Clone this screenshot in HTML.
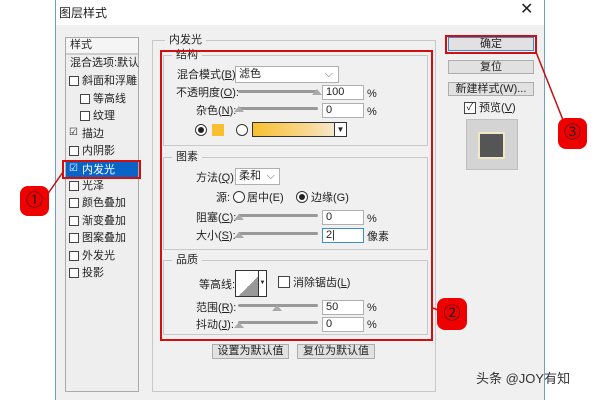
<!DOCTYPE html><html><head><meta charset="utf-8"><style>
*{margin:0;padding:0;box-sizing:border-box}
body{width:600px;height:400px;background:#fff;position:relative;overflow:hidden;font-family:"Liberation Sans","Noto Sans CJK SC",sans-serif;font-size:11px;color:#222}
.a{position:absolute}
.t{position:absolute;white-space:nowrap;line-height:12px}
.cb{position:absolute;width:10px;height:10px;border:1px solid #444;background:#fff}
.box{position:absolute;border:1px solid #b0b0b0;background:#fff;height:15px;padding-left:3px;line-height:13px}
.sl{position:absolute;height:3px;background:#999;border-radius:2px}
.btn{position:absolute;background:#e1e1e1;border:1px solid #adadad;text-align:center;line-height:12px}
.grp{position:absolute;border:1px solid #c8c8c8}
.gl{position:absolute;background:#f0f0f0;padding:0 4px;line-height:12px}
.num{position:absolute;width:29px;height:30px;background:#e00;border-radius:8px;color:#222;font-size:17px;text-align:center;line-height:30px}
.rad{position:absolute;width:12px;height:12px;border:1px solid #333;border-radius:50%;background:#fff}
.tri{position:absolute;width:0;height:0;border-left:5px solid transparent;border-right:5px solid transparent;border-bottom:6px solid #aaa}
</style></head><body>
<div class="a" style="left:55px;top:0;width:490px;height:400px;background:#f0f0f0;border-left:1px solid #6fa0c8;border-right:1px solid #6fa0c8"></div>
<div class="a" style="left:56px;top:0;width:488px;height:25px;background:#fff"></div>
<div class="t" style="left:59px;top:7px;font-size:12px">图层样式</div>
<div class="t" style="left:520px;top:4px;font-size:16px">✕</div>
<!-- left list -->
<div class="a" style="left:65px;top:37px;width:74px;height:355px;border:1px solid #aaa;background:#eee"></div>
<div class="a" style="left:66px;top:38px;width:72px;height:17px;background:#f5f5f5;border-bottom:2px solid #ccc"></div>
<div class="t" style="left:70px;top:39px">样式</div>
<div class="t" style="left:70px;top:57px">混合选项:默认</div>
<div class="a" style="left:66px;top:161px;width:72px;height:17px;background:#0a64c8"></div>
<div class="a" style="left:62px;top:160px;width:79px;height:19px;border:2px solid #d01010"></div>
<div class="cb" style="left:69px;top:76px"></div><div class="t" style="left:82px;top:75px">斜面和浮雕</div>
<div class="cb" style="left:80px;top:94px"></div><div class="t" style="left:93px;top:93px">等高线</div>
<div class="cb" style="left:80px;top:111px"></div><div class="t" style="left:93px;top:110px">纹理</div>
<div class="t" style="left:69px;top:127px;font-size:10px">☑</div><div class="t" style="left:82px;top:128px">描边</div>
<div class="cb" style="left:69px;top:146px"></div><div class="t" style="left:82px;top:145px">内阴影</div>
<div class="t" style="left:69px;top:163px;font-size:10px;color:#fff">☑</div><div class="t" style="left:82px;top:164px;color:#fff">内发光</div>
<div class="cb" style="left:69px;top:181px"></div><div class="t" style="left:82px;top:180px">光泽</div>
<div class="cb" style="left:69px;top:198px"></div><div class="t" style="left:82px;top:197px">颜色叠加</div>
<div class="cb" style="left:69px;top:216px"></div><div class="t" style="left:82px;top:215px">渐变叠加</div>
<div class="cb" style="left:69px;top:233px"></div><div class="t" style="left:82px;top:232px">图案叠加</div>
<div class="cb" style="left:69px;top:251px"></div><div class="t" style="left:82px;top:250px">外发光</div>
<div class="cb" style="left:69px;top:268px"></div><div class="t" style="left:82px;top:267px">投影</div>
<!-- main group -->
<div class="grp" style="left:152px;top:40px;width:284px;height:352px"></div>
<div class="gl" style="left:165px;top:34px">内发光</div>
<div class="grp" style="left:163px;top:55px;width:265px;height:91px"></div>
<div class="gl" style="left:172px;top:49px">结构</div>
<div class="grp" style="left:163px;top:157px;width:265px;height:93px"></div>
<div class="gl" style="left:172px;top:151px">图素</div>
<div class="grp" style="left:163px;top:260px;width:265px;height:75px"></div>
<div class="gl" style="left:172px;top:254px">品质</div>
<div class="a" style="left:160px;top:50px;width:273px;height:291px;border:2px solid #d01010"></div>
<!-- 结构 -->
<div class="t" style="left:177px;top:69px">混合模式(<u>B</u>):</div>
<div class="box" style="left:235px;top:66px;width:104px;height:17px;line-height:15px">滤色<span style="position:absolute;right:5px;color:#666">⌵</span></div>
<div class="t" style="left:176px;top:87px">不透明度(<u>O</u>):</div>
<div class="sl" style="left:238px;top:90px;width:80px"></div><div class="tri" style="left:312px;top:89px"></div>
<div class="box" style="left:322px;top:85px;width:42px">100</div><div class="t" style="left:367px;top:88px">%</div>
<div class="t" style="left:196px;top:105px">杂色(<u>N</u>):</div>
<div class="sl" style="left:238px;top:107px;width:80px"></div><div class="tri" style="left:234px;top:106px"></div>
<div class="box" style="left:322px;top:103px;width:42px">0</div><div class="t" style="left:367px;top:106px">%</div>
<div class="rad" style="left:195px;top:124px"></div><div class="a" style="left:198px;top:127px;width:6px;height:6px;border-radius:50%;background:#222"></div>
<div class="a" style="left:212px;top:124px;width:12px;height:12px;background:#f8c030"></div>
<div class="rad" style="left:236px;top:124px"></div>
<div class="a" style="left:252px;top:122px;width:94px;height:15px;border:1px solid #333;background:linear-gradient(90deg,#f8c030,#f8d890 60%,#f4eee4)"></div>
<div class="a" style="left:334px;top:122px;width:13px;height:15px;border:1px solid #333;background:#fff;font-size:8px;text-align:center;line-height:13px">▼</div>
<!-- 图素 -->
<div class="t" style="left:196px;top:172px">方法(<u>Q</u>):</div>
<div class="box" style="left:235px;top:168px;width:45px;height:17px;line-height:15px">柔和<span style="position:absolute;right:4px;color:#666">⌵</span></div>
<div class="t" style="left:216px;top:192px">源:</div>
<div class="rad" style="left:233px;top:191px"></div><div class="t" style="left:247px;top:192px">居中(E)</div>
<div class="rad" style="left:296px;top:191px"></div><div class="a" style="left:299px;top:194px;width:6px;height:6px;border-radius:50%;background:#222"></div>
<div class="t" style="left:311px;top:192px">边缘(G)</div>
<div class="t" style="left:196px;top:212px">阻塞(<u>C</u>):</div>
<div class="sl" style="left:238px;top:214px;width:80px"></div><div class="tri" style="left:234px;top:214px"></div>
<div class="box" style="left:322px;top:210px;width:42px">0</div><div class="t" style="left:367px;top:213px">%</div>
<div class="t" style="left:196px;top:230px">大小(<u>S</u>):</div>
<div class="sl" style="left:238px;top:232px;width:80px"></div><div class="tri" style="left:234px;top:232px"></div>
<div class="box" style="left:322px;top:228px;width:42px;border-color:#3c8cd0">2|</div><div class="t" style="left:367px;top:231px">像素</div>
<!-- 品质 -->
<div class="t" style="left:199px;top:279px">等高线:</div>
<div class="a" style="left:235px;top:270px;width:32px;height:27px;border:1px solid #333;background:linear-gradient(135deg,#fff 50%,#999 50%)"></div>
<div class="a" style="left:258px;top:270px;width:9px;height:27px;border:1px solid #333;background:#fff;font-size:6px;text-align:center;line-height:25px">▼</div>
<div class="cb" style="left:278px;top:276px;width:12px;height:12px"></div><div class="t" style="left:293px;top:277px">消除锯齿(<u>L</u>)</div>
<div class="t" style="left:196px;top:302px">范围(<u>R</u>):</div>
<div class="sl" style="left:238px;top:304px;width:80px"></div><div class="tri" style="left:272px;top:305px"></div>
<div class="box" style="left:322px;top:300px;width:42px">50</div><div class="t" style="left:367px;top:302px">%</div>
<div class="t" style="left:196px;top:319px">抖动(<u>J</u>):</div>
<div class="sl" style="left:238px;top:321px;width:80px"></div><div class="tri" style="left:234px;top:322px"></div>
<div class="box" style="left:322px;top:317px;width:42px">0</div><div class="t" style="left:367px;top:319px">%</div>
<div class="btn" style="left:212px;top:344px;width:77px;height:15px">设置为默认值</div>
<div class="btn" style="left:297px;top:344px;width:78px;height:15px">复位为默认值</div>
<!-- right -->
<div class="btn" style="left:448px;top:37px;width:86px;height:14px;border-color:#3c8cd0">确定</div>
<div class="a" style="left:445px;top:35px;width:92px;height:19px;border:2px solid #d01010"></div>
<div class="btn" style="left:448px;top:60px;width:86px;height:14px">复位</div>
<div class="btn" style="left:448px;top:82px;width:86px;height:14px">新建样式(W)...</div>
<div class="cb" style="left:464px;top:102px;width:12px;height:12px;font-size:10px;line-height:10px;text-align:center">✓</div>
<div class="t" style="left:479px;top:102px">预览(<u>V</u>)</div>
<div class="a" style="left:466px;top:119px;width:52px;height:51px;background:#d4d4d4;border:1px solid #c0c0c0"></div>
<div class="a" style="left:478px;top:132px;width:27px;height:27px;background:#555;border:2px solid #f0e6c8"></div>
<!-- callouts -->
<svg class="a" style="left:0;top:0" width="600" height="400"><g stroke="#c01010" stroke-width="1.5" fill="none"><line x1="47" y1="195" x2="63" y2="172"/><line x1="433" y1="308" x2="440" y2="311"/><line x1="536" y1="52" x2="563" y2="120"/></g></svg>
<div class="num" style="left:20px;top:186px">①</div>
<div class="num" style="left:437px;top:298px;width:30px;height:32px;line-height:32px">②</div>
<div class="num" style="left:558px;top:118px;height:31px">③</div>
<div class="t" style="left:476px;top:372px;font-size:13px;color:#333;line-height:14px">头条 @JOY有知</div>
</body></html>
